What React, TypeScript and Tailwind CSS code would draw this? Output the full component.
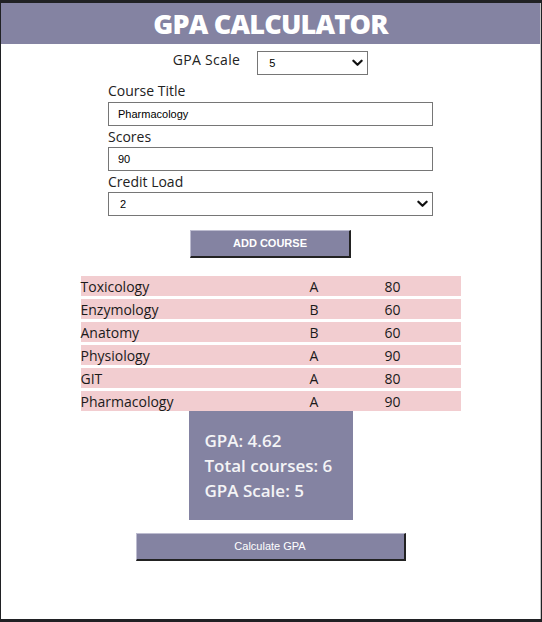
import { useState } from "react"

type Course = { title: string; grade: string; score: number }

const courses: Course[] = [
  { title: "Toxicology", grade: "A", score: 80 },
  { title: "Enzymology", grade: "B", score: 60 },
  { title: "Anatomy", grade: "B", score: 60 },
  { title: "Physiology", grade: "A", score: 90 },
  { title: "GIT", grade: "A", score: 80 },
  { title: "Pharmacology", grade: "A", score: 90 },
]

function Chevron() {
  return (
    <svg viewBox="0 0 12 8" className="w-[11px] h-[8px] pointer-events-none absolute right-[5px] top-1/2 -translate-y-1/2">
      <path d="M1.5 1.5 L6 6 L10.5 1.5" fill="none" stroke="#111" strokeWidth="2.4" strokeLinecap="round" strokeLinejoin="round" />
    </svg>
  )
}

export default function App() {
  const [scale, setScale] = useState("5")
  const [title, setTitle] = useState("Pharmacology")
  const [score, setScore] = useState("90")
  const [credit, setCredit] = useState("2")

  return (
    <div className="w-[542px] h-[622px] bg-[#202124] pt-[3px] pb-[3px] pl-px pr-0 font-['Open_Sans',sans-serif]">
      <div className="flex h-full">
        <div className="flex-1 bg-white flex flex-col items-center">
          {/* Header */}
          <div className="w-full h-[41px] bg-[#8483a2] flex items-center justify-center">
            <h1 className="text-white text-[27px] font-extrabold tracking-[-0.8px] leading-none">GPA CALCULATOR</h1>
          </div>

          {/* Scale */}
          <div className="flex items-start gap-[17px] mt-[7px]">
            <span className="text-[14px] tracking-[0.3px] text-[#222] leading-[20px] mt-[-1px]">GPA Scale</span>
            <div className="relative">
              <select
                value={scale}
                onChange={(e) => setScale(e.target.value)}
                className="block appearance-none w-[111px] h-[24px] border border-[#767676] bg-white pl-[11px] text-[11px] font-['Liberation_Sans',sans-serif] text-black outline-none"
              >
                <option value="5">5</option>
                <option value="4">4</option>
              </select>
              <Chevron />
            </div>
          </div>

          {/* Form */}
          <div className="w-[325px] flex flex-col mt-[4px]">
            <label className="text-[14px] text-[#222] leading-[23px]">Course Title</label>
            <input
              value={title}
              onChange={(e) => setTitle(e.target.value)}
              className="block h-[24px] border border-[#767676] px-[9px] text-[11px] font-['Liberation_Sans',sans-serif] text-black outline-none"
            />
            <label className="text-[14px] text-[#222] leading-[21px]">Scores</label>
            <input
              value={score}
              onChange={(e) => setScore(e.target.value)}
              className="block h-[24px] border border-[#767676] px-[9px] text-[11px] font-['Liberation_Sans',sans-serif] text-black outline-none"
            />
            <label className="text-[14px] text-[#222] leading-[21px]">Credit Load</label>
            <div className="relative">
              <select
                value={credit}
                onChange={(e) => setCredit(e.target.value)}
                className="block appearance-none w-full h-[24px] border border-[#767676] bg-white pl-[11px] text-[11px] font-['Liberation_Sans',sans-serif] text-black outline-none"
              >
                <option value="1">1</option>
                <option value="2">2</option>
                <option value="3">3</option>
              </select>
              <Chevron />
            </div>
          </div>

          <button className="mt-[14px] w-[161px] h-[28px] bg-[#8483a2] border-t border-l border-t-[#bdbcd0] border-l-[#bdbcd0] border-r-2 border-b-2 border-r-[#222] border-b-[#222] text-white text-[11px] font-bold font-['Liberation_Sans',sans-serif]">
            ADD COURSE
          </button>

          {/* Courses */}
          <div className="w-[380px] mt-[18px] flex flex-col gap-[3.6px]">
            {courses.map((c) => (
              <div key={c.title} className="grid grid-cols-[229px_75px_76px] h-[19.5px] bg-[#f2cdd0] items-center text-[14px] text-[#1a1a1a]">
                <span>{c.title}</span>
                <span>{c.grade}</span>
                <span>{c.score}</span>
              </div>
            ))}
          </div>

          {/* Result */}
          <div className="w-[164px] h-[109px] bg-[#8483a2] pl-4 pt-[17px] text-[#f4f4f6] text-[17px] font-semibold leading-[25px]">
            <p>GPA: 4.62</p>
            <p>Total courses: 6</p>
            <p>GPA Scale: 5</p>
          </div>

          <button className="mt-[13px] w-[270px] h-[28px] bg-[#8483a2] border-t border-l border-t-[#bdbcd0] border-l-[#bdbcd0] border-r-2 border-b-2 border-r-[#222] border-b-[#222] text-white text-[11px] font-['Liberation_Sans',sans-serif]">
            Calculate GPA
          </button>
        </div>
        <div className="w-px bg-[#c6c6c6]" />
        <div className="w-px bg-[#202124]" />
      </div>
    </div>
  )
}
